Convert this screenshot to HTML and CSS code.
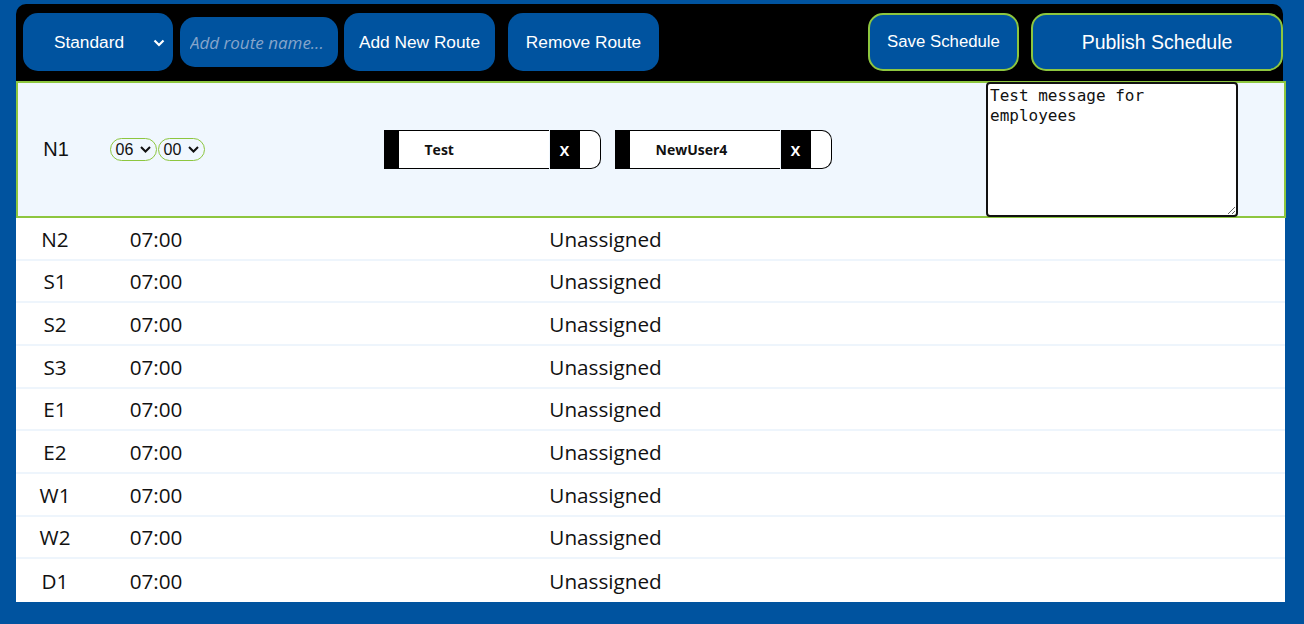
FILE: index.html
```html
<!DOCTYPE html>
<html>
<head>
<meta charset="utf-8">
<link rel="stylesheet" href="styles.css">
</head>
<body>
<div class="app">
  <div class="toolbar">
    <div class="tb-btn tb-select"><span class="sel-text">Standard</span>
      <svg class="sel-chev" width="12" height="8" viewBox="0 0 12 8"><path d="M1.5 1.5 L6 6 L10.5 1.5" fill="none" stroke="#fff" stroke-width="2.2"/></svg>
    </div>
    <input class="tb-input" type="text" placeholder="Add route name...">
    <button class="tb-btn tb-add">Add New Route</button>
    <button class="tb-btn tb-remove">Remove Route</button>
    <button class="tb-btn tb-save">Save Schedule</button>
    <button class="tb-btn tb-publish">Publish Schedule</button>
  </div>

  <div class="row-sel">
    <div class="cell-name sel-name">N1</div>
    <div class="cell-time">
      <span class="mini-sel">06<svg width="11" height="7" viewBox="0 0 11 7"><path d="M1 1 L5.5 5.5 L10 1" fill="none" stroke="#111" stroke-width="2"/></svg></span>
      <span class="mini-sel">00<svg width="11" height="7" viewBox="0 0 11 7"><path d="M1 1 L5.5 5.5 L10 1" fill="none" stroke="#111" stroke-width="2"/></svg></span>
    </div>
    <div class="cell-assign chips">
      <div class="chip"><span class="chip-bar"></span><span class="chip-name">Test</span><span class="chip-x">x</span><span class="chip-end"></span></div>
      <div class="chip"><span class="chip-bar"></span><span class="chip-name">NewUser4</span><span class="chip-x">x</span><span class="chip-end"></span></div>
    </div>
    <div class="cell-msg"><textarea class="msg">Test message for employees</textarea></div>
  </div>

  <div class="table">
    <div class="row"><div class="cell-name">N2</div><div class="cell-time">07:00</div><div class="cell-assign">Unassigned</div><div></div></div>
    <div class="row"><div class="cell-name">S1</div><div class="cell-time">07:00</div><div class="cell-assign">Unassigned</div><div></div></div>
    <div class="row"><div class="cell-name">S2</div><div class="cell-time">07:00</div><div class="cell-assign">Unassigned</div><div></div></div>
    <div class="row"><div class="cell-name">S3</div><div class="cell-time">07:00</div><div class="cell-assign">Unassigned</div><div></div></div>
    <div class="row"><div class="cell-name">E1</div><div class="cell-time">07:00</div><div class="cell-assign">Unassigned</div><div></div></div>
    <div class="row"><div class="cell-name">E2</div><div class="cell-time">07:00</div><div class="cell-assign">Unassigned</div><div></div></div>
    <div class="row"><div class="cell-name">W1</div><div class="cell-time">07:00</div><div class="cell-assign">Unassigned</div><div></div></div>
    <div class="row"><div class="cell-name">W2</div><div class="cell-time">07:00</div><div class="cell-assign">Unassigned</div><div></div></div>
    <div class="row"><div class="cell-name">D1</div><div class="cell-time">07:00</div><div class="cell-assign">Unassigned</div><div></div></div>
  </div>
</div>
</body>
</html>
```
FILE: styles.css
```css
html, body {
  margin: 0;
  padding: 0;
  background: #00539f;
  font-family: "Open Sans", "Noto Sans", sans-serif;
  color: #111;
}

.app {
  width: 1269px;
  margin-left: 16px;
  padding-top: 4px;
}

.toolbar {
  width: 1267px;
  height: 77px;
  box-sizing: border-box;
  background: #000;
  border-radius: 10px 10px 0 0;
  display: flex;
  align-items: center;
  padding: 0 0 1px 7px;
}

.tb-btn {
  height: 58px;
  width: 151px;
  box-sizing: border-box;
  border: none;
  border-radius: 15px;
  background: #00539f;
  color: #fff;
  font-family: "Liberation Sans", Arial, sans-serif;
  font-size: 17.3px;
  padding: 0;
  flex: none;
}

.tb-select {
  width: 150px;
  margin-right: 7px;
  display: flex;
  align-items: center;
  justify-content: center;
  position: relative;
  padding-right: 18px;
}

.sel-chev {
  position: absolute;
  right: 8px;
  top: 26px;
}

.tb-input {
  width: 158px;
  height: 50px;
  box-sizing: border-box;
  border: none;
  border-radius: 15px;
  background: #00539f;
  color: #fff;
  margin-right: 6px;
  padding: 0 0 0 10px;
  font-family: "Open Sans", sans-serif;
  font-size: 17px;
  font-style: italic;
  outline: none;
  flex: none;
}

.tb-input::placeholder {
  color: #86a5cb;
  font-style: italic;
  font-weight: 500;
}

.tb-add {
  margin-right: 13px;
}

.tb-save {
  margin-left: auto;
  border: 2px solid #8dc63f;
  font-size: 16.8px;
}

.tb-publish {
  width: 252px;
  margin-left: 12px;
  border: 2px solid #8dc63f;
  font-size: 19.5px;
}

.row-sel {
  width: 1270px;
  height: 137px;
  box-sizing: border-box;
  border: 2px solid #8dc63f;
  background: #f0f7fe;
  display: grid;
  grid-template-columns: 76px 126px 766px 1fr;
  grid-template-rows: 133px;
  align-items: center;
}

.cell-name {
  text-align: center;
}

.sel-name {
  font-family: "Liberation Sans", Arial, sans-serif;
  font-size: 20px;
}

.cell-time {
  display: flex;
  justify-content: center;
  gap: 1px;
}

.mini-sel {
  display: inline-flex;
  align-items: center;
  width: 47px;
  height: 23px;
  box-sizing: border-box;
  border: 1px solid #8dc63f;
  border-radius: 12px;
  padding-left: 5px;
  font-family: "Liberation Sans", Arial, sans-serif;
  font-size: 16px;
  color: #111;
}

.mini-sel svg {
  margin-left: 7px;
}

.chips {
  display: flex;
  justify-content: center;
  gap: 14px;
  padding-left: 9px;
}

.chip {
  display: flex;
  height: 39px;
}

.chip-bar {
  width: 15px;
  background: #000;
}

.chip-name {
  width: 150px;
  box-sizing: border-box;
  border-top: 1px solid #000;
  border-bottom: 1px solid #000;
  background: #fff;
  padding-left: 26px;
  font-weight: 700;
  font-size: 14px;
  display: flex;
  align-items: center;
  color: #111;
}

.chip-x {
  width: 30px;
  margin-left: 1px;
  background: #000;
  color: #fff;
  font-weight: 600;
  font-size: 18px;
  display: flex;
  align-items: center;
  justify-content: center;
  padding-bottom: 2px;
  box-sizing: border-box;
}

.chip-end {
  width: 21px;
  box-sizing: border-box;
  border: 1px solid #000;
  border-left: none;
  border-radius: 0 10px 10px 0;
  background: #fff;
}

.cell-msg {
  display: flex;
  align-self: stretch;
}

.msg {
  width: 252px;
  height: 135px;
  margin: -1px 0;
  box-sizing: border-box;
  border: 2px solid #111;
  border-radius: 4px;
  padding: 2px;
  font-family: "DejaVu Sans Mono", "Liberation Mono", monospace;
  font-size: 16px;
  line-height: 20px;
  color: #111;
  background: #fff;
}

.table {
  width: 1269px;
  background: #fff;
}

.row {
  height: 42.67px;
  box-sizing: border-box;
  border-bottom: 2px solid #eef5fc;
  display: grid;
  grid-template-columns: 78px 124px 770px 1fr;
  align-items: center;
  padding-top: 1px;
  font-size: 20.7px;
  color: #111;
}

.row:last-child {
  border-bottom: none;
}

.row .cell-assign {
  text-align: center;
  padding-left: 5px;
}
```
